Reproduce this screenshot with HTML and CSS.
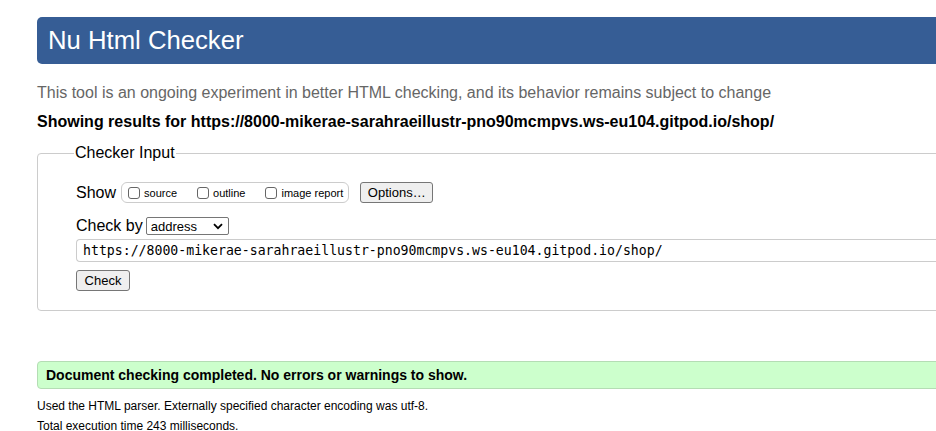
FILE: index.html
```html
<!DOCTYPE html>
<html>
<head>
<meta charset="utf-8">
<title>Nu Html Checker</title>
<link rel="stylesheet" href="styles.css">
</head>
<body>
<div class="page">
  <h1 class="title">Nu Html Checker</h1>
  <p class="intro">This tool is an ongoing experiment in better HTML checking, and its behavior remains subject to change</p>
  <p class="results-for">Showing results for https://8000-mikerae-sarahraeillustr-pno90mcmpvs.ws-eu104.gitpod.io/shop/</p>
  <fieldset class="checker">
    <legend class="legend">Checker Input</legend>
    <div class="row show-row">
      <span class="label">Show</span>
      <span class="opts">
        <label class="opt"><input type="checkbox" class="cb">source</label>
        <label class="opt"><input type="checkbox" class="cb">outline</label>
        <label class="opt"><input type="checkbox" class="cb">image report</label>
      </span>
      <button class="btn options">Options…</button>
    </div>
    <div class="row checkby-row">
      <span class="label">Check by</span>
      <span class="select">address<svg class="chev" width="10" height="7" viewBox="0 0 10 7"><path d="M1 1.2 L5 5.2 L9 1.2" fill="none" stroke="#000" stroke-width="1.8"/></svg></span>
    </div>
    <div class="url">https://8000-mikerae-sarahraeillustr-pno90mcmpvs.ws-eu104.gitpod.io/shop/</div>
    <button class="btn check">Check</button>
  </fieldset>
  <div class="success">Document checking completed. No errors or warnings to show.</div>
  <p class="meta">Used the HTML parser. Externally specified character encoding was utf-8.</p>
  <p class="meta">Total execution time 243 milliseconds.</p>
</div>
</body>
</html>
```
FILE: styles.css
```css
html, body {
  margin: 0;
  padding: 0;
  overflow: hidden;
  background: #fff;
}
body {
  font-family: "Liberation Sans", Arial, sans-serif;
  color: #000;
}
.page {
  width: 1000px;
  padding: 17px 0 0 37px;
}
.title {
  margin: 0;
  height: 47px;
  box-sizing: border-box;
  background: #365d95;
  color: #fff;
  font-weight: normal;
  font-size: 25.7px;
  line-height: 47px;
  padding-left: 11px;
  border-radius: 5px;
}
.intro {
  margin: 19px 0 0;
  font-size: 16px;
  line-height: 20px;
  color: #666;
}
.results-for {
  margin: 9px 0 0;
  font-size: 16px;
  line-height: 20px;
  font-weight: bold;
}
.checker {
  margin: 12px 0 0;
  border: 1px solid #ccc;
  border-radius: 4px;
  padding: 20px 0 19px 38px;
  min-width: 0;
  height: 167px;
  box-sizing: border-box;
}
.legend {
  font-size: 16px;
  padding: 0 1px;
  margin-left: -2px;
  line-height: 18px;
}
.row {
  display: flex;
  align-items: center;
  font-size: 16px;
}
.label {
  line-height: 20px;
}
.opts {
  display: inline-flex;
  align-items: center;
  margin-left: 5px;
  height: 21px;
  box-sizing: border-box;
  border: 1px solid #ccc;
  border-radius: 6px;
  padding: 0 5px 0 6px;
  gap: 20px;
}
.opt {
  display: inline-flex;
  align-items: center;
  font-size: 11px;
}
.cb {
  width: 12px;
  height: 12px;
  margin: 0 4px 0 0;
  appearance: none;
  border: 1px solid #666;
  border-radius: 3px;
  box-sizing: border-box;
  background: #fff;
}
.btn {
  font-family: "Liberation Sans", Arial, sans-serif;
  font-size: 13px;
  color: #000;
  background: #efefef;
  border: 1px solid #767676;
  border-radius: 3px;
  height: 21px;
  padding: 0 6px;
  box-sizing: border-box;
}
.options {
  margin-left: 11px;
  width: 73px;
}
.checkby-row {
  margin-top: 13px;
}
.select {
  display: inline-flex;
  align-items: center;
  justify-content: space-between;
  margin-left: 3px;
  width: 83px;
  height: 18px;
  box-sizing: border-box;
  border: 1px solid #767676;
  border-radius: 2px;
  font-size: 13px;
  padding: 0 5px 0 4px;
}
.url {
  margin-top: 3px;
  height: 23px;
  box-sizing: border-box;
  border: 1px solid #ccc;
  border-right: 0;
  border-radius: 4px 0 0 4px;
  font-family: "DejaVu Sans Mono", monospace;
  font-size: 13.2px;
  line-height: 21px;
  padding-left: 6px;
  white-space: nowrap;
  overflow: hidden;
}
.check {
  margin-top: 8px;
  width: 54px;
}
.success {
  margin-top: 50px;
  height: 28px;
  box-sizing: border-box;
  background: #ccffcc;
  border: 1px solid #b4ddb4;
  border-radius: 4px;
  font-weight: bold;
  font-size: 14px;
  line-height: 26px;
  padding-left: 8px;
}
.meta {
  margin: 0;
  font-size: 12px;
  line-height: 20px;
  color: #000;
}
.success + .meta {
  margin-top: 7px;
}
```
